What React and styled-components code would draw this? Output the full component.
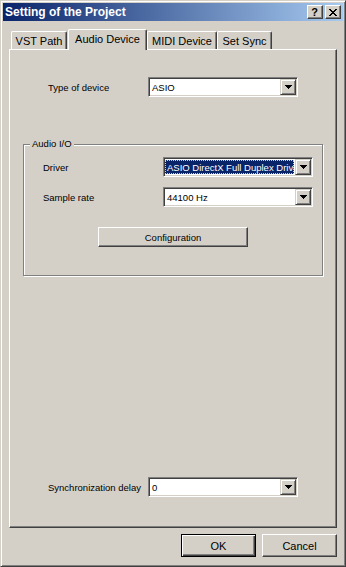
import React from 'react';
import styled, { createGlobalStyle, css } from 'styled-components';

const Global = createGlobalStyle`
  html, body { margin: 0; padding: 0; background: #d4d0c8; }
  body { font-family: "Liberation Sans", Arial, sans-serif; color: #000; }
  * { box-sizing: border-box; }
`;

const Window = styled.div`
  width: 346px;
  height: 567px;
  background: #d4d0c8;
  border: 1px solid;
  border-color: #d4d0c8 #404040 #404040 #d4d0c8;
  box-shadow: inset 1px 1px 0 #fff, inset -1px -1px 0 #808080;
  padding: 2px;
  display: flex;
  flex-direction: column;
`;

const TitleBar = styled.div`
  flex: none;
  height: 18px;
  display: flex;
  align-items: center;
  padding: 0 2px;
  background: linear-gradient(to right, #0a246a, #a6caf0);
`;

const Title = styled.span`
  flex: 1;
  color: #fff;
  font-weight: bold;
  font-size: 12px;
  white-space: nowrap;
  padding-left: 0;
`;

const CaptionButtons = styled.div`
  display: flex;
  gap: 2px;
`;

const CaptionButton = styled.div`
  width: 16px;
  height: 14px;
  background: #d4d0c8;
  border: 1px solid;
  border-color: #fff #404040 #404040 #fff;
  box-shadow: inset -1px -1px 0 #808080;
  display: flex;
  align-items: center;
  justify-content: center;
  font-weight: bold;
  font-size: 11px;
  line-height: 1;
  padding-right: 1px;
`;

const Body = styled.div`
  flex: 1;
  display: flex;
  flex-direction: column;
  padding: 8px 6px 7px 6px;
`;

const TabRow = styled.div`
  flex: none;
  height: 20px;
  display: flex;
  align-items: flex-end;
  padding-left: 2px;
`;

const Tab = styled.div`
  width: ${(p) => p.$w}px;
  height: ${(p) => (p.$active ? 21 : 18)}px;
  margin-left: ${(p) => p.$ml || 0}px;
  margin-bottom: ${(p) => (p.$active ? -1 : 0)}px;
  padding-bottom: ${(p) => (p.$active ? 2 : 0)}px;
  position: relative;
  z-index: ${(p) => (p.$active ? 1 : 0)};
  background: #d4d0c8;
  border-top: 1px solid #fff;
  border-left: 1px solid #fff;
  border-right: 1px solid #404040;
  border-radius: 2px 2px 0 0;
  box-shadow: inset -1px 0 0 #808080;
  font-size: 11px;
  display: flex;
  align-items: center;
  justify-content: center;
  white-space: nowrap;
`;

const Panel = styled.div`
  flex: 1;
  display: flex;
  flex-direction: column;
  border: 1px solid;
  border-color: #fff #404040 #404040 #fff;
  box-shadow: inset -1px -1px 0 #808080;
  padding: 27px 13px 30px 13px;
`;

const FieldRow = styled.div`
  display: grid;
  grid-template-columns: ${(p) => p.$label}px 150px;
  align-items: center;
  height: 20px;
  padding-left: ${(p) => p.$indent}px;
`;

const Label = styled.span`
  font-size: 9.5px;
  white-space: nowrap;
`;

const Group = styled.div`
  position: relative;
  margin-top: 47px;
  border: 1px solid #808080;
  box-shadow: inset 1px 1px 0 #fff, 1px 1px 0 #fff;
  padding: 12px 0 28px 0;
  display: flex;
  flex-direction: column;
  gap: 10px;
`;

const Legend = styled.span`
  position: absolute;
  top: -7px;
  left: 6px;
  padding: 0 2px;
  background: #d4d0c8;
  font-size: 9.5px;
  line-height: 12px;
`;

const Spacer = styled.div`
  flex: 1;
`;

const Combo = styled.div`
  width: 150px;
  height: 20px;
  display: flex;
  background: #fff;
  border: 1px solid;
  border-color: #808080 #fff #fff #808080;
  box-shadow: inset 1px 1px 0 #404040, inset -1px -1px 0 #d4d0c8;
  padding: 1px;
`;

const ComboText = styled.div`
  flex: 1;
  min-width: 0;
  display: flex;
  align-items: center;
  padding-left: 2px;
  font-size: 9.5px;
  white-space: nowrap;
  overflow: hidden;
  ${(p) =>
    p.$selected &&
    css`
      background: #0a246a;
      color: #fff;
      margin: 1px 1px 1px 0;
      outline: 1px dotted #e6d27a;
      outline-offset: -1px;
    `}
`;

const DropButton = styled.div`
  flex: none;
  width: 16px;
  height: 16px;
  background: #d4d0c8;
  border: 1px solid;
  border-color: #d4d0c8 #404040 #404040 #d4d0c8;
  box-shadow: inset 1px 1px 0 #fff, inset -1px -1px 0 #808080;
  display: flex;
  align-items: center;
  justify-content: center;
`;

const PushButton = styled.div`
  width: ${(p) => p.$w}px;
  height: ${(p) => p.$h}px;
  background: #d4d0c8;
  font-size: ${(p) => p.$fs}px;
  display: flex;
  align-items: center;
  justify-content: center;
  align-self: ${(p) => (p.$center ? 'center' : 'auto')};
  margin-top: ${(p) => p.$mt || 0}px;
  ${(p) =>
    p.$default
      ? css`
          border: 1px solid #000;
          box-shadow: inset 1px 1px 0 #fff, inset -1px -1px 0 #404040, inset -2px -2px 0 #808080;
        `
      : css`
          border: 1px solid;
          border-color: #fff #404040 #404040 #fff;
          box-shadow: inset -1px -1px 0 #808080;
        `}
`;

const Footer = styled.div`
  flex: none;
  display: flex;
  justify-content: flex-end;
  gap: 6px;
  margin-top: 6px;
`;

const Arrow = () => (
  <svg width="7" height="4" viewBox="0 0 7 4" shapeRendering="crispEdges">
    <path d="M0 0h7v1H0zM1 1h5v1H1zM2 2h3v1H2zM3 3h1v1H3z" fill="#000" />
  </svg>
);

const CloseGlyph = () => (
  <svg width="8" height="7" viewBox="0 0 8 7" shapeRendering="crispEdges">
    <path
      d="M0 0h2v1H0zM6 0h2v1H6zM1 1h2v1H1zM5 1h2v1H5zM2 2h4v1H2zM3 3h2v1H3zM2 4h4v1H2zM1 5h2v1H1zM5 5h2v1H5zM0 6h2v1H0zM6 6h2v1H6z"
      fill="#000"
    />
  </svg>
);

const ComboBox = ({ value, selected }) => (
  <Combo>
    <ComboText $selected={selected}>{value}</ComboText>
    <DropButton>
      <Arrow />
    </DropButton>
  </Combo>
);

const tabs = [
  { label: 'VST Path', w: 56 },
  { label: 'Audio Device', w: 79, ml: 1, active: true },
  { label: 'MIDI Device', w: 70 },
  { label: 'Set Sync', w: 55 },
];

export default function App() {
  return (
    <>
      <Global />
      <Window>
        <TitleBar>
          <Title>Setting of the Project</Title>
          <CaptionButtons>
            <CaptionButton>?</CaptionButton>
            <CaptionButton>
              <CloseGlyph />
            </CaptionButton>
          </CaptionButtons>
        </TitleBar>
        <Body>
          <TabRow>
            {tabs.map((t) => (
              <Tab key={t.label} $w={t.w} $ml={t.ml} $active={t.active}>
                {t.label}
              </Tab>
            ))}
          </TabRow>
          <Panel>
            <FieldRow $label={100} $indent={25}>
              <Label>Type of device</Label>
              <ComboBox value="ASIO" />
            </FieldRow>
            <Group>
              <Legend>Audio I/O</Legend>
              <FieldRow $label={120} $indent={19}>
                <Label>Driver</Label>
                <ComboBox value="ASIO DirectX Full Duplex Driver" selected />
              </FieldRow>
              <FieldRow $label={120} $indent={19}>
                <Label>Sample rate</Label>
                <ComboBox value="44100 Hz" />
              </FieldRow>
              <PushButton $w={150} $h={20} $fs={9.5} $center $mt={10}>
                Configuration
              </PushButton>
            </Group>
            <Spacer />
            <FieldRow $label={100} $indent={25}>
              <Label>Synchronization delay</Label>
              <ComboBox value="0" />
            </FieldRow>
          </Panel>
          <Footer>
            <PushButton $w={75} $h={23} $fs={11} $default>
              OK
            </PushButton>
            <PushButton $w={75} $h={23} $fs={11}>
              Cancel
            </PushButton>
          </Footer>
        </Body>
      </Window>
    </>
  );
}
